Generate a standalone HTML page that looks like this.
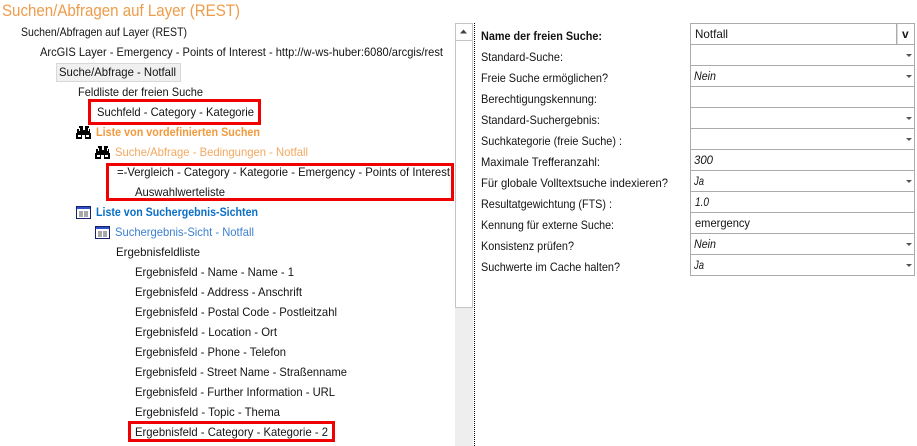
<!DOCTYPE html>
<html lang="de">
<head>
<meta charset="utf-8">
<title>Suchen/Abfragen auf Layer (REST)</title>
<style>
html,body{margin:0;padding:0;background:#fff;width:917px;height:446px;overflow:hidden}
svg{display:block}
text{font-family:"Liberation Sans",sans-serif;font-size:12px;fill:#141414;white-space:pre}
.o{fill:#f19a3e}
.b{fill:#0b6fc6}
.i{font-style:italic}
.r{fill:none;stroke:#f00000;stroke-width:3}
</style>
</head>
<body>
<svg width="917" height="446" viewBox="0 0 917 446" xmlns="http://www.w3.org/2000/svg">
<defs>
<g id="bino" shape-rendering="crispEdges">
<path d="M3 0h4v4h2v-4h4v3h1v4h1v6h-6v-4h-3v4h-6v-6h1v-4h2z" fill="#000"/>
<path d="M3 2h1v3h-1zM12 2h1v3h-1zM2 9h3v2h-3zM10 9h3v2h-3z" fill="#fff"/>
</g>
<g id="tbl" shape-rendering="crispEdges">
<rect x="0" y="0" width="15" height="13" fill="#16206e"/>
<rect x="1" y="1" width="13" height="2" fill="#2b50c8"/>
<rect x="1" y="3" width="13" height="9" fill="#fff"/>
<rect x="3" y="5" width="4" height="6" fill="#a8a8a8"/>
<rect x="8" y="5" width="4" height="6" fill="#a8a8a8"/>
</g>
<path id="ar" d="M0 0h6l-3 3z" fill="#555"/>
</defs>

<text x="2" y="16" style="font-size:16.500px;fill:#ee9c4a" textLength="238" lengthAdjust="spacingAndGlyphs">Suchen/Abfragen auf Layer (REST)</text>

<!-- Tree -->
<text x="21" y="36" textLength="166" lengthAdjust="spacingAndGlyphs">Suchen/Abfragen auf Layer (REST)</text>
<text x="40" y="56" textLength="403" lengthAdjust="spacingAndGlyphs">ArcGIS Layer - Emergency - Points of Interest - http://w-ws-huber:6080/arcgis/rest</text>
<rect x="56.500" y="63.500" width="124" height="18" fill="#f0f0f0" stroke="#d8d8d8"/>
<text x="59" y="76" textLength="117" lengthAdjust="spacingAndGlyphs">Suche/Abfrage - Notfall</text>
<text x="78" y="96" textLength="125" lengthAdjust="spacingAndGlyphs">Feldliste der freien Suche</text>
<rect class="r" x="89.500" y="100.500" width="170" height="23"/>
<text x="97" y="116" textLength="157" lengthAdjust="spacingAndGlyphs">Suchfeld - Category - Kategorie</text>

<use href="#bino" x="76" y="126"/>
<text x="96" y="136" class="o" font-weight="700" textLength="164" lengthAdjust="spacingAndGlyphs">Liste von vordefinierten Suchen</text>
<use href="#bino" x="95" y="146"/>
<text x="115" y="156" style="fill:#f4a860" textLength="193" lengthAdjust="spacingAndGlyphs">Suche/Abfrage - Bedingungen - Notfall</text>

<rect class="r" x="107.500" y="164.500" width="345" height="35"/>
<text x="117" y="176" textLength="333" lengthAdjust="spacingAndGlyphs">=-Vergleich - Category - Kategorie - Emergency - Points of Interest</text>
<text x="135" y="196" textLength="90" lengthAdjust="spacingAndGlyphs">Auswahlwerteliste</text>

<use href="#tbl" x="76" y="206"/>
<text x="96" y="216" class="b" font-weight="700" textLength="162" lengthAdjust="spacingAndGlyphs">Liste von Suchergebnis-Sichten</text>
<use href="#tbl" x="95" y="226"/>
<text x="115" y="236" style="fill:#3f80cf" textLength="139" lengthAdjust="spacingAndGlyphs">Suchergebnis-Sicht - Notfall</text>

<text x="116" y="256" textLength="84" lengthAdjust="spacingAndGlyphs">Ergebnisfeldliste</text>
<text x="135" y="276" textLength="159" lengthAdjust="spacingAndGlyphs">Ergebnisfeld - Name - Name - 1</text>
<text x="135" y="296" textLength="167" lengthAdjust="spacingAndGlyphs">Ergebnisfeld - Address - Anschrift</text>
<text x="135" y="316" textLength="202" lengthAdjust="spacingAndGlyphs">Ergebnisfeld - Postal Code - Postleitzahl</text>
<text x="135" y="336" textLength="142" lengthAdjust="spacingAndGlyphs">Ergebnisfeld - Location - Ort</text>
<text x="135" y="356" textLength="151" lengthAdjust="spacingAndGlyphs">Ergebnisfeld - Phone - Telefon</text>
<text x="135" y="376" textLength="212" lengthAdjust="spacingAndGlyphs">Ergebnisfeld - Street Name - Straßenname</text>
<text x="135" y="396" textLength="200" lengthAdjust="spacingAndGlyphs">Ergebnisfeld - Further Information - URL</text>
<text x="135" y="416" textLength="145" lengthAdjust="spacingAndGlyphs">Ergebnisfeld - Topic - Thema</text>
<rect class="r" x="129.500" y="422.500" width="204" height="18"/>
<text x="135" y="436" textLength="193" lengthAdjust="spacingAndGlyphs">Ergebnisfeld - Category - Kategorie - 2</text>

<!-- Scrollbar -->
<g shape-rendering="crispEdges">
<rect x="455" y="40" width="18" height="406" fill="#eeeeee"/>
<rect x="455.500" y="23.500" width="17" height="17" fill="#fff" stroke="#c4c4c4"/>
<rect x="455.500" y="40.500" width="17" height="267" fill="#fff" stroke="#c4c4c4"/>
<path d="M474.500 23V446" stroke="#000" stroke-width="1" stroke-dasharray="1 1"/>
</g>
<path d="M460 33.500l3.500-4 3.500 4z" fill="#444"/>

<!-- Labels -->
<text x="481" y="40" font-weight="700" textLength="121" lengthAdjust="spacingAndGlyphs">Name der freien Suche:</text>
<text x="481" y="61" textLength="82" lengthAdjust="spacingAndGlyphs">Standard-Suche:</text>
<text x="481" y="82" textLength="127" lengthAdjust="spacingAndGlyphs">Freie Suche ermöglichen?</text>
<text x="481" y="103" textLength="116" lengthAdjust="spacingAndGlyphs">Berechtigungskennung:</text>
<text x="481" y="124" textLength="119" lengthAdjust="spacingAndGlyphs">Standard-Suchergebnis:</text>
<text x="481" y="145" textLength="141" lengthAdjust="spacingAndGlyphs">Suchkategorie (freie Suche) :</text>
<text x="481" y="166" textLength="119" lengthAdjust="spacingAndGlyphs">Maximale Trefferanzahl:</text>
<text x="481" y="187" textLength="187" lengthAdjust="spacingAndGlyphs">Für globale Volltextsuche indexieren?</text>
<text x="481" y="208" textLength="131" lengthAdjust="spacingAndGlyphs">Resultatgewichtung (FTS) :</text>
<text x="481" y="229" textLength="133" lengthAdjust="spacingAndGlyphs">Kennung für externe Suche:</text>
<text x="481" y="250" textLength="93" lengthAdjust="spacingAndGlyphs">Konsistenz prüfen?</text>
<text x="481" y="271" textLength="139" lengthAdjust="spacingAndGlyphs">Suchwerte im Cache halten?</text>

<!-- Fields -->
<g shape-rendering="crispEdges" fill="none" stroke="#ababab">
<rect x="690.500" y="23.500" width="224" height="252"/>
<path d="M690 44.500h225M690 65.500h225M690 86.500h225M690 107.500h225M690 128.500h225M690 149.500h225M690 170.500h225M690 191.500h225M690 212.500h225M690 233.500h225M690 254.500h225"/>
<path d="M896.500 24v20"/>
</g>
<rect x="897" y="24" width="1" height="20" fill="#dcdcdc"/>
<text x="902" y="38" font-weight="700" style="font-size:12px">v</text>

<text x="695" y="38" textLength="33" lengthAdjust="spacingAndGlyphs">Notfall</text>
<text x="694" y="80" class="i" textLength="22" lengthAdjust="spacingAndGlyphs">Nein</text>
<text x="694" y="164" class="i" textLength="19" lengthAdjust="spacingAndGlyphs">300</text>
<text x="694" y="185" class="i" textLength="10" lengthAdjust="spacingAndGlyphs">Ja</text>
<text x="695" y="206" class="i" textLength="14" lengthAdjust="spacingAndGlyphs">1.0</text>
<text x="695" y="227" textLength="55" lengthAdjust="spacingAndGlyphs">emergency</text>
<text x="694" y="248" class="i" textLength="22" lengthAdjust="spacingAndGlyphs">Nein</text>
<text x="694" y="269" class="i" textLength="10" lengthAdjust="spacingAndGlyphs">Ja</text>

<use href="#ar" x="906" y="54"/>
<use href="#ar" x="906" y="75"/>
<use href="#ar" x="906" y="117"/>
<use href="#ar" x="906" y="138"/>
<use href="#ar" x="906" y="180"/>
<use href="#ar" x="906" y="243"/>
<use href="#ar" x="906" y="264"/>
</svg>
</body>
</html>
